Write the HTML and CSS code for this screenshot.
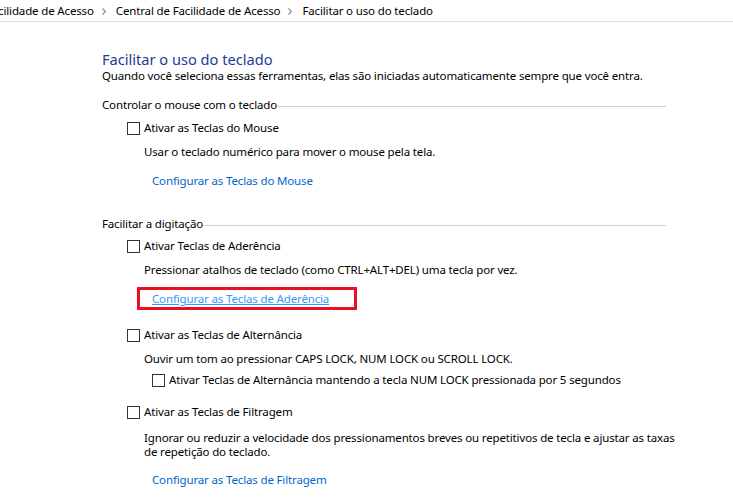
FILE: index.html
```html
<!DOCTYPE html>
<html lang="pt-BR">
<head>
<meta charset="utf-8">
<title>Facilitar o uso do teclado</title>
<link rel="stylesheet" href="styles.css">
</head>
<body>
<nav class="breadcrumb">
  <span class="crumb">Facilidade de Acesso</span>
  <svg class="chev" width="4" height="7" viewBox="0 0 4 7"><path d="M0.5 0.5 L3.5 3.5 L0.5 6.5" fill="none" stroke="#8a8a8a" stroke-width="1.2"/></svg>
  <span class="crumb">Central de Facilidade de Acesso</span>
  <svg class="chev" width="4" height="7" viewBox="0 0 4 7"><path d="M0.5 0.5 L3.5 3.5 L0.5 6.5" fill="none" stroke="#8a8a8a" stroke-width="1.2"/></svg>
  <span class="crumb">Facilitar o uso do teclado</span>
</nav>

<main class="content">
  <h1 class="title">Facilitar o uso do teclado</h1>
  <p class="subtitle">Quando você seleciona essas ferramentas, elas são iniciadas automaticamente sempre que você entra.</p>

  <section class="group">
    <div class="group-head">Controlar o mouse com o teclado</div>
    <label class="check"><span class="box"></span>Ativar as Teclas do Mouse</label>
    <p class="desc">Usar o teclado numérico para mover o mouse pela tela.</p>
    <a class="link" href="#">Configurar as Teclas do Mouse</a>
  </section>

  <section class="group group-2">
    <div class="group-head">Facilitar a digitação</div>
    <label class="check check-2"><span class="box"></span>Ativar Teclas de Aderência</label>
    <p class="desc">Pressionar atalhos de teclado (como CTRL+ALT+DEL) uma tecla por vez.</p>
    <div class="highlight"><a class="link link-hover" href="#">Configurar as Teclas de Aderência</a></div>

    <label class="check check-3"><span class="box"></span>Ativar as Teclas de Alternância</label>
    <p class="desc desc-3">Ouvir um tom ao pressionar CAPS LOCK, NUM LOCK ou SCROLL LOCK.</p>
    <label class="check check-sub"><span class="box"></span>Ativar Teclas de Alternância mantendo a tecla NUM LOCK pressionada por 5 segundos</label>

    <label class="check check-4"><span class="box"></span>Ativar as Teclas de Filtragem</label>
    <p class="desc desc-4">Ignorar ou reduzir a velocidade dos pressionamentos breves ou repetitivos de tecla e ajustar as taxas de repetição do teclado.</p>
    <a class="link link-4" href="#">Configurar as Teclas de Filtragem</a>
  </section>
</main>
</body>
</html>
```

FILE: styles.css
```css
html, body {
  margin: 0;
  padding: 0;
  background: #ffffff;
  overflow: hidden;
}

body {
  width: 733px;
  height: 499px;
  font-family: "Noto Sans", "Open Sans", sans-serif;
  font-size: 11.5px;
  letter-spacing: -0.15px;
  color: #000000;
}

.breadcrumb {
  height: 21px;
  border-bottom: 1px solid #dcdcdc;
  display: flex;
  align-items: center;
  margin-left: -14px;
  white-space: nowrap;
  line-height: 16px;
}

.chev {
  margin: 1px 10px 0 8px;
  flex: none;
}

.content {
  width: 564px;
  padding-left: 102px;
}

.title {
  margin: 28px 0 0 0;
  font-size: 14.6px;
  font-weight: normal;
  line-height: 18px;
  letter-spacing: 0;
  color: #1e3996;
}

.subtitle {
  margin: 0;
  line-height: 16px;
  white-space: nowrap;
}

.group {
  margin-top: 13px;
  display: flex;
  flex-direction: column;
  align-items: flex-start;
}

.group-2 {
  margin-top: 27px;
}

.group-head {
  align-self: stretch;
  display: flex;
  align-items: center;
  line-height: 16px;
}

.group-head::after {
  content: "";
  flex: 1;
  height: 1px;
  background: #d2d2d2;
  margin: 2px 0 0 1px;
}

.check {
  display: flex;
  align-items: center;
  margin: 7px 0 0 25px;
  line-height: 16px;
}

.box {
  width: 11px;
  height: 11px;
  border: 1px solid #333333;
  background: #ffffff;
  margin-right: 4px;
  flex: none;
}

.desc {
  margin: 8px 0 0 42px;
  line-height: 16px;
}

.link {
  color: #0066cc;
  text-decoration: none;
  margin: 13px 0 0 50px;
  line-height: 16px;
}

.check-2 {
  margin-top: 6px;
}

.highlight {
  margin: 9px 0 0 35px;
  width: 214px;
  height: 17px;
  border: 3px solid #e81123;
  display: flex;
  align-items: center;
}

.link-hover {
  margin: 0 0 0 12px;
  color: #3399ff;
  text-decoration: underline;
  line-height: 17px;
}

.check-3 {
  margin-top: 17px;
}

.desc-3 {
  margin-top: 8px;
}

.check-sub {
  margin: 5px 0 0 50px;
}

.check-4 {
  margin-top: 16px;
}

.desc-4 {
  margin-top: 11px;
  width: 532px;
  line-height: 14px;
}

.link-4 {
  margin-top: 13px;
}
```
